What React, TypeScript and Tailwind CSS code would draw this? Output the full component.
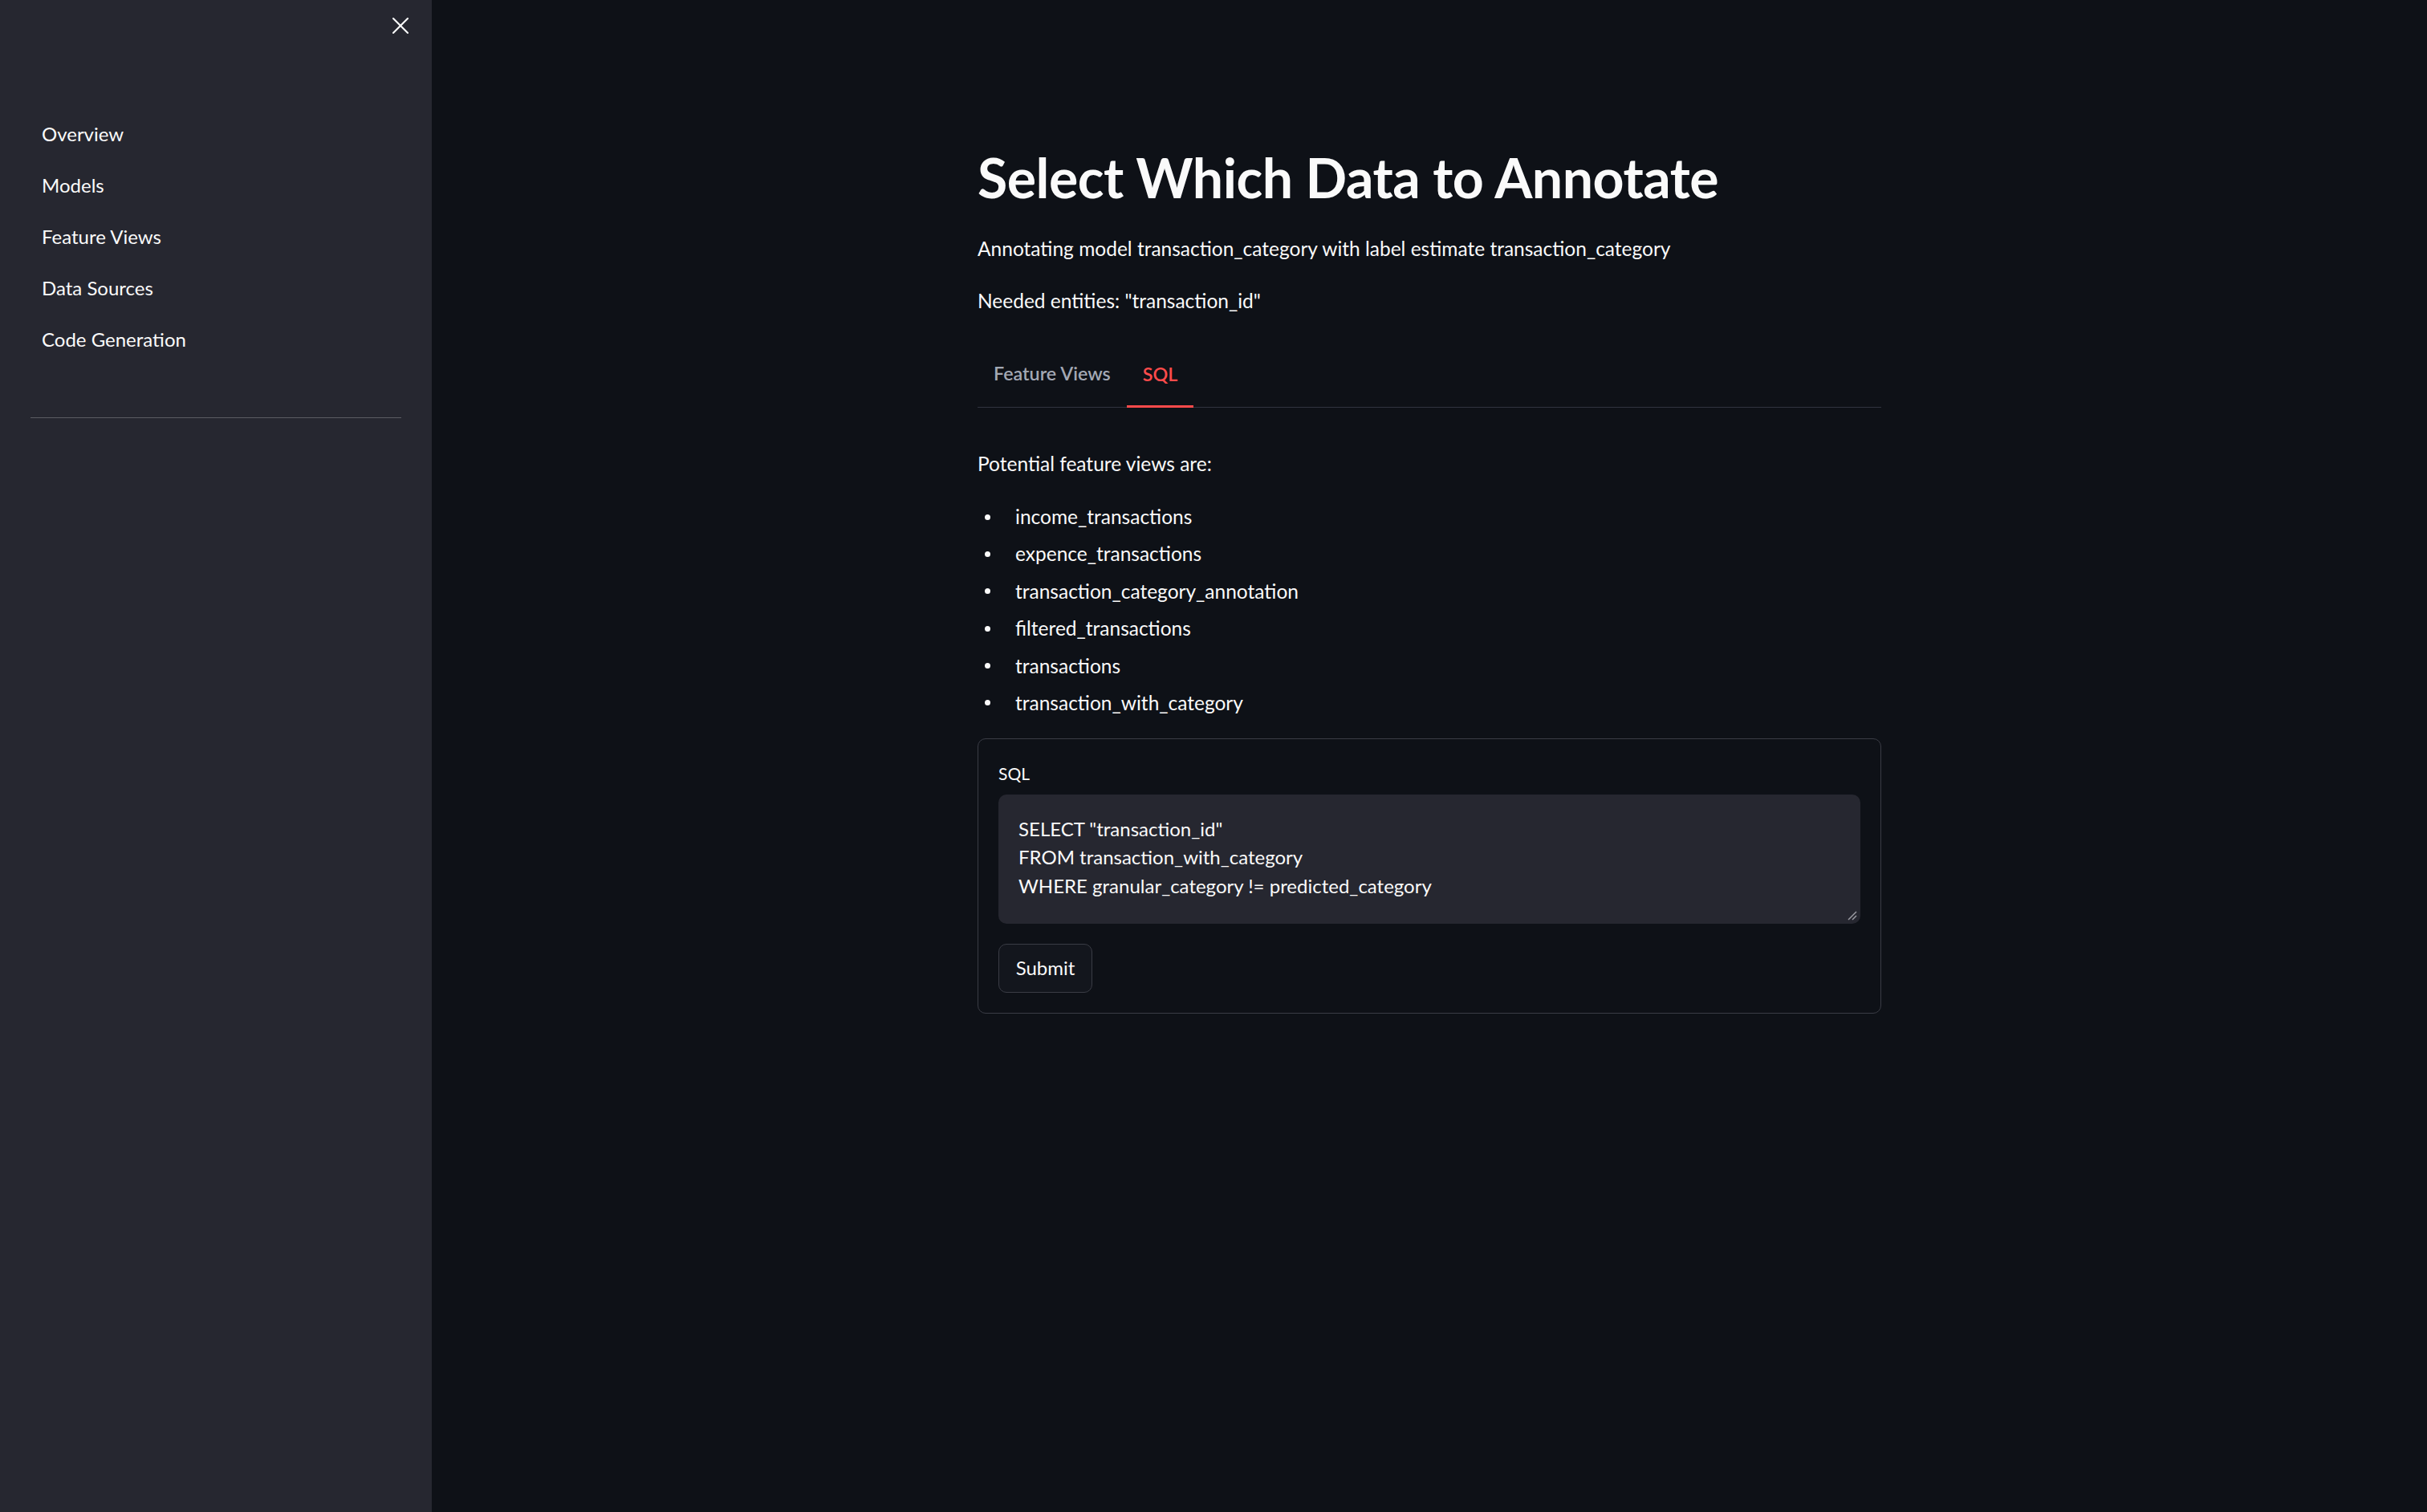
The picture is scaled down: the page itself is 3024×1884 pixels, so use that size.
import React from 'react';
import { X } from 'lucide-react';

const navItems = ['Overview', 'Models', 'Feature Views', 'Data Sources', 'Code Generation'];

const featureViews = [
  'income_transactions',
  'expence_transactions',
  'transaction_category_annotation',
  'filtered_transactions',
  'transactions',
  'transaction_with_category',
];

const Sidebar = () => (
  <aside className="w-[538px] shrink-0 min-h-[1884px] bg-[#262730] flex flex-col">
    <div className="flex justify-end pt-[14px] pr-[21px]">
      <X className="w-[36px] h-[36px] text-[#fafafa]" strokeWidth={1.4} />
    </div>
    <nav className="flex flex-col mt-[85px] pl-[52px]">
      {navItems.map((item) => (
        <a key={item} className="h-[64px] leading-[64px] text-[24px] text-[#fafafa] cursor-pointer">
          {item}
        </a>
      ))}
    </nav>
    <div className="mx-[38px] mt-[65px] border-t border-[#5b5c63]" />
  </aside>
);

const Tabs = () => (
  <div className="flex border-b border-[#31333f] mt-[50px]">
    <button className="px-[20px] pb-[22px] leading-[40px] text-[23.3px] font-semibold text-[#a3a8b4]">
      Feature Views
    </button>
    <button className="px-[20px] pb-[19px] leading-[40px] text-[23.3px] font-semibold text-[#ff4b4b] border-b-[3px] border-[#ff4b4b] -mb-px">
      SQL
    </button>
  </div>
);

const SqlForm = () => (
  <div className="mt-[24px] border border-[#3a3c45] rounded-[10px] px-[25px] pt-[27px] pb-[25px]">
    <div className="leading-[32px] text-[21px] text-[#fafafa]">SQL</div>
    <div className="mt-[10px] relative h-[161px] bg-[#262730] rounded-[10px] pl-[25px] pt-[25px]">
      <div className="text-[24px] leading-[35.5px] text-[#fafafa]">
        <div>SELECT "transaction_id"</div>
        <div>FROM transaction_with_category</div>
        <div>WHERE granular_category != predicted_category</div>
      </div>
      <svg className="absolute right-[4px] bottom-[4px]" width="14" height="14" viewBox="0 0 14 14">
        <path d="M13 3 L3 13 M13 8 L8 13" stroke="#9a9ba1" strokeWidth="1.5" />
      </svg>
    </div>
    <button className="mt-[25px] w-[117px] h-[61px] border border-[#3a3c45] rounded-[10px] bg-[#13161d] text-[24px] text-[#fafafa]">
      Submit
    </button>
  </div>
);

export default function App() {
  return (
    <div className="flex w-full min-h-[1884px] bg-[#0e1117] font-['Lato',sans-serif] text-[#fafafa]">
      <Sidebar />
      <main className="flex-1">
        <div className="w-[1126px] mx-auto pt-[179px]">
          <h1 className="text-[68px] leading-[84px] font-bold tracking-[-0.5px]">Select Which Data to Annotate</h1>
          <p className="mt-[27px] leading-[40px] text-[24.5px]">
            Annotating model transaction_category with label estimate transaction_category
          </p>
          <p className="mt-[25px] leading-[40px] text-[24.5px]">Needed entities: "transaction_id"</p>
          <Tabs />
          <p className="mt-[50px] leading-[40px] text-[24.5px]">Potential feature views are:</p>
          <ul className="mt-[26px] flex flex-col gap-[6.4px]">
            {featureViews.map((fv) => (
              <li key={fv} className="flex items-center leading-[40px] text-[24.5px]">
                <span className="w-[7px] h-[7px] rounded-full bg-[#fafafa] ml-[9px] mr-[31px]" />
                {fv}
              </li>
            ))}
          </ul>
          <SqlForm />
        </div>
      </main>
    </div>
  );
}
